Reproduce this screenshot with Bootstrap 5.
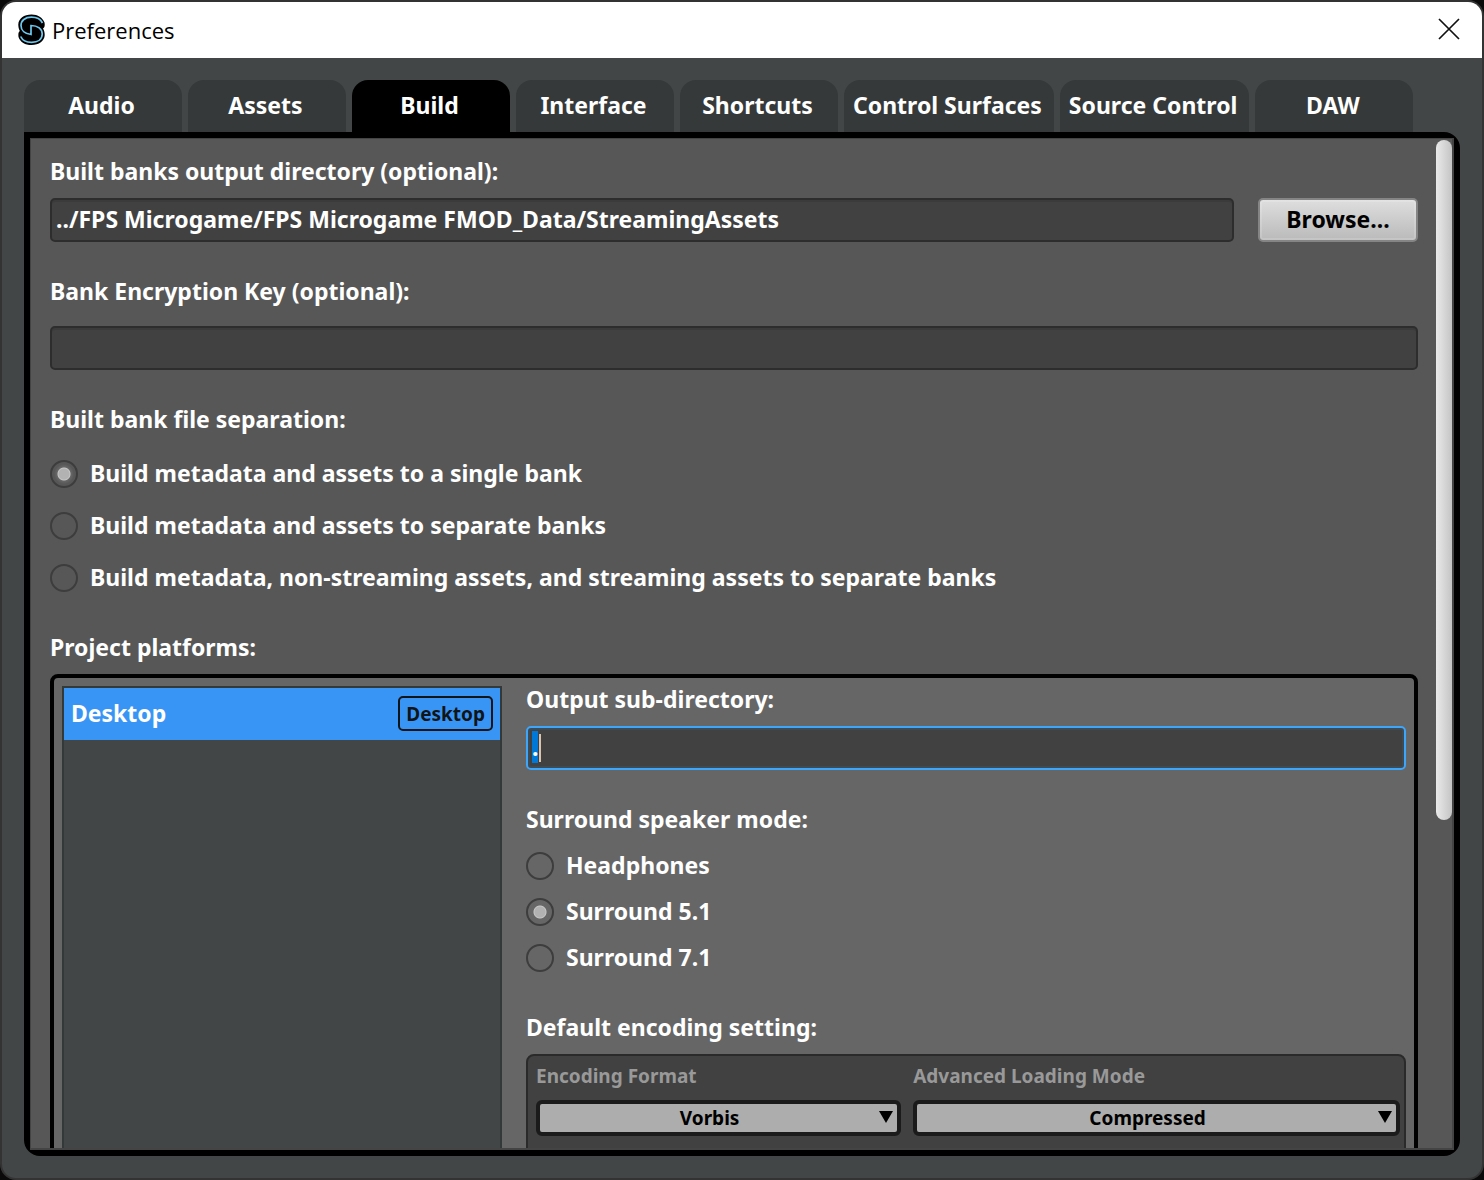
<!DOCTYPE html>
<html lang="en">
<head>
<meta charset="utf-8">
<meta name="viewport" content="width=device-width, initial-scale=1">
<title>Preferences</title>
<link href="https://cdn.jsdelivr.net/npm/bootstrap@5.3.0/dist/css/bootstrap.min.css" rel="stylesheet">
<style>
body{background:#0a0a0a;color:#fff;font:700 23px/32px "Noto Sans","Open Sans",sans-serif;}
.dialog-window{border:2px solid #333;border-radius:16px;background:#424646;}
.title-bar{background:#fff;color:#000;height:56px;padding:0 22px 0 16px;font:400 22px/32px "Open Sans","Noto Sans",sans-serif;}
.title-bar button{color:#000;line-height:0;}
.title-bar button svg{margin-bottom:2px;}
.dialog-body{padding:22px;min-height:0;}
.pref-tabs{gap:6px;border:0;}
.pref-tabs .nav-link{min-width:158px;height:52px;margin:0;padding:0 12px 2px 9px;border:0;border-radius:16px 16px 0 0;background:#363939;color:#fff;}
.pref-tabs .nav-link.active{background:#000;color:#fff;}
.pref-panel{border:6px solid #000;border-radius:0 16px 16px 16px;background:#000;min-height:0;}
.pref-view{border:solid #444;border-width:1px 2px 2px 1px;background:#575757;min-height:0;}
.pref-content{padding:16px 18px 0 19px;}
.scroll-thumb{width:16px;height:680px;margin-top:1px;border-radius:8px;background:linear-gradient(90deg,#eaeaea,#c4c4c4);}
label,legend,.section-title{display:block;float:none;font-size:23px;font-weight:700;line-height:32px;margin:0;}
.dark-input,.dark-input:focus{height:44px;padding:0 4px 2px;border:2px solid #2d2d2d;border-radius:5px;background:#414141;color:#fff;font-size:23px;font-weight:700;line-height:28px;box-shadow:inset 0 2px 0 #3b3b3b;}
.dark-input.output-dir,.dark-input.output-dir:focus{border-color:#3da5fa;box-shadow:inset 0 0 0 2px #3e4b55;}
.output-dir::selection{background:#0078d7;color:#fff;}
.text-caret{left:13px;top:8px;width:2px;height:28px;background:#d8c4b0;}
.browse-btn,.browse-btn:hover{width:160px;height:44px;padding:0 0 2px;border:2px solid #858585;border-radius:5px;background:linear-gradient(#dedede,#bababa);box-shadow:inset 0 0 0 2px #ffffff26;color:#000;font-size:23px;font-weight:700;}
.field-row{margin-top:11px;}
.key-row{margin-top:19px;}
.field-group{margin-top:33px;}
.pick{gap:12px;padding:0;margin:0;min-height:32px;}
.pick label{padding-bottom:2px;line-height:30px;}
.pick .form-check-input{flex:none;width:28px;height:28px;margin:0;float:none;border:2px solid #3d3d3d;background:transparent;box-shadow:none;}
.pick .form-check-input:checked{background:radial-gradient(circle,#b2b2b2 5px,#c6c6c6 6px,#c6c6c6 6px,#676767 7px,transparent 10px);}
.build-picks{gap:20px;margin-top:23px;}
.speaker-picks{gap:14px;margin-top:15px;}
.platform-box{border:4px solid #000;border-radius:8px;background:#666;padding:5px 8px;gap:24px;height:800px;}
.platform-list{flex:0 0 440px;border:2px solid #333838;background:#424646;margin-top:3px;}
.platform-list .list-group-item{height:52px;padding:0 7px 2px;border:0;border-radius:0;background:#3995f5;color:#fff;}
.kind-tag{height:35px;padding:0 6px;border:2px solid #111518;border-radius:5px;color:#111518;font-size:19px;line-height:32px;}
.encoding-box{border:2px solid #2a2a2a;border-radius:8px;background:#414141;height:300px;padding:5px 4px 0 8px;display:grid;grid-template-columns:3fr 4fr;gap:12px;align-items:start;}
.encoding-box label{font-size:19px;line-height:30px;color:#999;margin-bottom:9px;}
.encoding-box .form-select{height:36px;padding:0 42px 0 24px;border:4px solid #1b1b1b;border-radius:6px;background:#adadad;color:#000;font-size:19px;font-weight:700;line-height:28px;text-align-last:center;}
.encoding-box svg{right:8px;top:11px;pointer-events:none;}
</style>
</head>
<body>
<main class="dialog-window d-flex flex-column vh-100 overflow-hidden">
  <header class="title-bar d-flex align-items-center flex-shrink-0">
    <svg width="30" height="32" viewBox="0 0 30 32" aria-hidden="true">
      <path d="M13.500 .5C6 .5 .5 4.500 .3 10.500C.3 13 .8 15 1.800 17C.3 18 .2 20 .5 23C2.500 28.500 7 31 13.500 31C21 31 26.500 27 26.700 21C26.700 18 26 16 25 14.500C26.800 13.500 27 11.500 26.500 8.500C24.500 3.500 20 .5 13.500 .5Z" fill="#000"/>
      <path d="M24.500 9C22.500 5 18.500 3.200 13.500 3.200C7 3.200 3 6.500 3 11.500C3 16.500 7 20 13 20.500V11.500C20 11.500 24.200 15 24.200 20C24.200 25.200 20 28.300 13.500 28.300C8.500 28.300 4.500 26.500 2.700 22.500" fill="none" stroke="#6cc8ee" stroke-width="1.700"/>
    </svg>
    <span class="ms-1">Preferences</span>
    <button type="button" class="btn p-0 border-0 ms-auto" aria-label="Close">
      <svg width="22" height="22" viewBox="0 0 22 22" aria-hidden="true"><path d="M1 1 21 21M21 1 1 21" stroke="#111" stroke-width="1.700"/></svg>
    </button>
  </header>
  <div class="dialog-body d-flex flex-column flex-grow-1">
    <div class="nav nav-tabs pref-tabs flex-nowrap flex-shrink-0" role="tablist">
      <button type="button" class="nav-link" role="tab">Audio</button>
      <button type="button" class="nav-link" role="tab">Assets</button>
      <button type="button" class="nav-link active" role="tab" aria-selected="true">Build</button>
      <button type="button" class="nav-link" role="tab">Interface</button>
      <button type="button" class="nav-link" role="tab">Shortcuts</button>
      <button type="button" class="nav-link text-nowrap" role="tab">Control Surfaces</button>
      <button type="button" class="nav-link text-nowrap" role="tab">Source Control</button>
      <button type="button" class="nav-link" role="tab">DAW</button>
    </div>
    <section class="pref-panel d-flex flex-column flex-grow-1">
      <div class="pref-view d-flex flex-grow-1 overflow-hidden">
        <form class="pref-content flex-grow-1">
          <label for="bankDir">Built banks output directory (optional):</label>
          <div class="d-flex gap-4 field-row">
            <input id="bankDir" type="text" class="form-control dark-input" value="../FPS Microgame/FPS Microgame FMOD_Data/StreamingAssets">
            <button type="button" class="btn browse-btn flex-shrink-0">Browse...</button>
          </div>
          <label for="bankKey" class="field-group">Bank Encryption Key (optional):</label>
          <div class="key-row"><input id="bankKey" type="text" class="form-control dark-input"></div>
          <fieldset class="field-group">
            <legend>Built bank file separation:</legend>
            <div class="build-picks d-flex flex-column">
              <div class="form-check pick d-flex align-items-center"><input class="form-check-input" type="radio" name="sep" id="sep1" checked><label for="sep1">Build metadata and assets to a single bank</label></div>
              <div class="form-check pick d-flex align-items-center"><input class="form-check-input" type="radio" name="sep" id="sep2"><label for="sep2">Build metadata and assets to separate banks</label></div>
              <div class="form-check pick d-flex align-items-center"><input class="form-check-input" type="radio" name="sep" id="sep3"><label for="sep3">Build metadata, non-streaming assets, and streaming assets to separate banks</label></div>
            </div>
          </fieldset>
          <h2 class="section-title field-group pt-1">Project platforms:</h2>
          <div class="platform-box d-flex field-row">
            <div class="list-group rounded-0 platform-list">
              <a href="#" class="list-group-item d-flex align-items-center justify-content-between" aria-current="true">Desktop<span class="kind-tag">Desktop</span></a>
            </div>
            <div class="flex-grow-1">
              <label for="outDir">Output sub-directory:</label>
              <div class="position-relative field-row">
                <input id="outDir" type="text" class="form-control dark-input output-dir" value=".">
                <span class="text-caret position-absolute"></span>
              </div>
              <fieldset class="field-group">
                <legend>Surround speaker mode:</legend>
                <div class="speaker-picks d-flex flex-column">
                  <div class="form-check pick d-flex align-items-center"><input class="form-check-input" type="radio" name="spk" id="spk1"><label for="spk1">Headphones</label></div>
                  <div class="form-check pick d-flex align-items-center"><input class="form-check-input" type="radio" name="spk" id="spk2" checked><label for="spk2">Surround 5.1</label></div>
                  <div class="form-check pick d-flex align-items-center"><input class="form-check-input" type="radio" name="spk" id="spk3"><label for="spk3">Surround 7.1</label></div>
                </div>
              </fieldset>
              <h2 class="section-title field-group pt-1">Default encoding setting:</h2>
              <div class="encoding-box field-row">
                <div>
                  <label for="encFormat">Encoding Format</label>
                  <div class="position-relative">
                    <select id="encFormat" class="form-select"><option>Vorbis</option></select>
                    <svg class="position-absolute" width="14" height="12" viewBox="0 0 14 12" aria-hidden="true"><path d="M0 0h14L7 12Z"/></svg>
                  </div>
                </div>
                <div>
                  <label for="loadMode">Advanced Loading Mode</label>
                  <div class="position-relative">
                    <select id="loadMode" class="form-select"><option>Compressed</option></select>
                    <svg class="position-absolute" width="14" height="12" viewBox="0 0 14 12" aria-hidden="true"><path d="M0 0h14L7 12Z"/></svg>
                  </div>
                </div>
              </div>
            </div>
          </div>
        </form>
        <div class="scroll-thumb flex-shrink-0"></div>
      </div>
    </section>
  </div>
</main>
<script src="https://cdn.jsdelivr.net/npm/bootstrap@5.3.0/dist/js/bootstrap.bundle.min.js"></script>
<script>
const outDir = document.getElementById('outDir');
outDir.focus({preventScroll: true});
outDir.select();
</script>
</body>
</html>
